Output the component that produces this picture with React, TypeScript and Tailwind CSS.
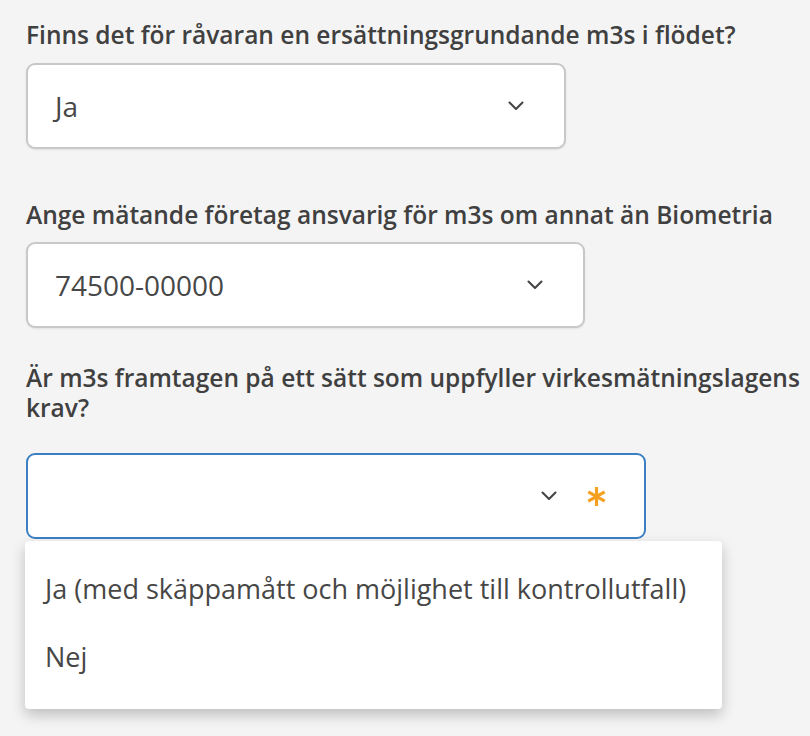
import React from "react";

function Chevron() {
  return (
    <svg width="16" height="10" viewBox="0 0 16 10" fill="none" className="shrink-0">
      <path d="M1.5 1.5l6.5 6.5 6.5-6.5" stroke="#454545" strokeWidth="2.1" strokeLinecap="round" strokeLinejoin="round" />
    </svg>
  );
}

function Asterisk() {
  return (
    <svg width="21" height="21" viewBox="0 0 20 20" fill="none" className="shrink-0">
      <g stroke="#f5a020" strokeWidth="3" strokeLinecap="butt">
        <path d="M10 1v18" />
        <path d="M2.2 5.5l15.6 9" />
        <path d="M2.2 14.5l15.6-9" />
      </g>
    </svg>
  );
}

type SelectProps = {
  value?: string;
  width: string;
  focused?: boolean;
  required?: boolean;
  children?: React.ReactNode;
};

function FakeSelect({ value, width, focused, required, children }: SelectProps) {
  return (
    <div className={`relative ${width}`}>
      <div
        className={
          focused
            ? "flex h-[86px] items-center rounded-[9px] border-2 border-[#3b80c3] bg-white pl-[26px] pr-[37px]"
            : "flex h-[86px] items-center rounded-[9px] border-2 border-[#c8c8c8] bg-white pl-[27px] pr-[40px] shadow-[0_1px_2px_rgba(0,0,0,0.08)]"
        }
      >
        <span className="flex-1 text-[28px] text-[#474747]">{value}</span>
        <Chevron />
        {required && (
          <span className="ml-[29px]">
            <Asterisk />
          </span>
        )}
      </div>
      {children}
    </div>
  );
}

export default function App() {
  return (
    <div className="min-h-screen bg-[#f4f4f4] pl-[26px] pt-[20px] font-['Open_Sans',sans-serif]">
      {/* Fråga 1 */}
      <div className="flex flex-col gap-[13px]">
        <label className="text-[24.5px] font-semibold leading-[30px] text-[#404040]">
          Finns det för råvaran en ersättningsgrundande m3s i flödet?
        </label>
        <FakeSelect value="Ja" width="w-[540px]" />
      </div>

      {/* Fråga 2 */}
      <div className="mt-[51px] flex flex-col gap-[12px]">
        <label className="text-[24.5px] font-semibold leading-[30px] text-[#404040]">
          Ange mätande företag ansvarig för m3s om annat än Biometria
        </label>
        <FakeSelect value="74500-00000" width="w-[559px]" />
      </div>

      {/* Fråga 3 */}
      <div className="mt-[35px] flex flex-col gap-[30px]">
        <label className="text-[24.5px] font-semibold leading-[30px] text-[#404040]">
          Är m3s framtagen på ett sätt som uppfyller virkesmätningslagens krav?
        </label>
        <FakeSelect width="w-[620px]" focused required>
          <ul className="absolute left-[-1px] top-full z-10 mt-[2px] w-[697px] rounded-[4px] bg-white pt-[14px] pb-[18px] text-[27px] text-[#474747] shadow-[0_6px_14px_rgba(0,0,0,0.22)]">
            <li className="flex h-[68px] items-center px-[20px]">
              Ja (med skäppamått och möjlighet till kontrollutfall)
            </li>
            <li className="flex h-[68px] items-center px-[20px]">Nej</li>
          </ul>
        </FakeSelect>
      </div>
    </div>
  );
}
